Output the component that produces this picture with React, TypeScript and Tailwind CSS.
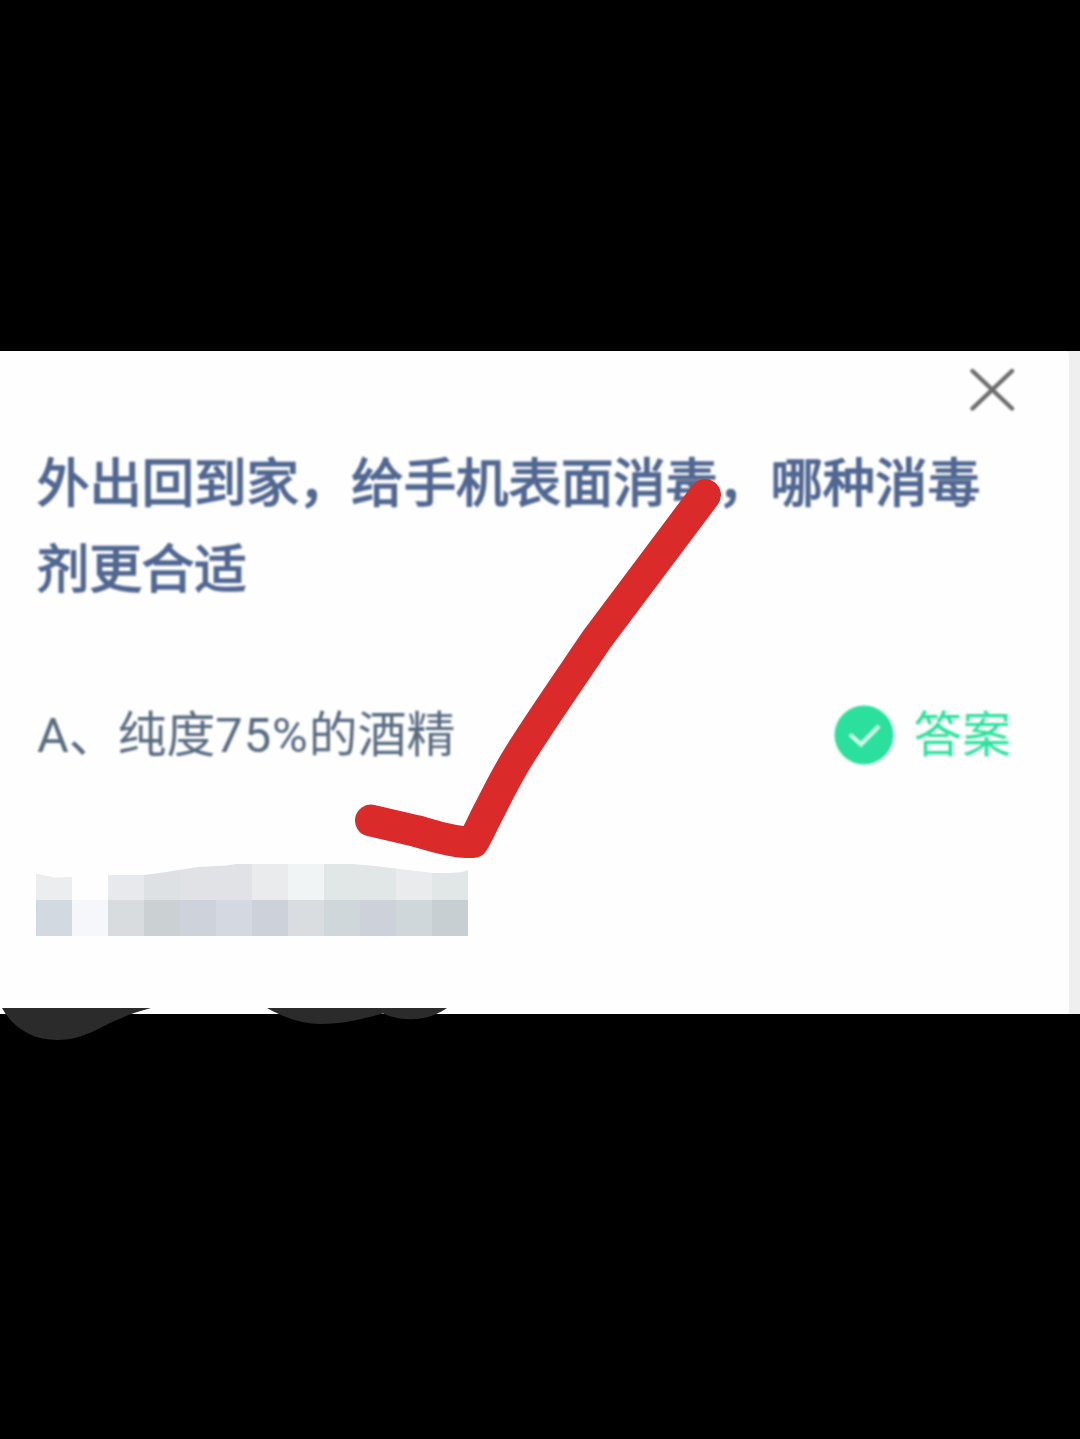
import React from "react";

const upperCells = [
  "bg-[#ebedee]", "bg-[#fefefe]", "bg-[#e7e9ec]", "bg-[#dde1e4]", "bg-[#e1e2e6]", "bg-[#e1e2e6]",
  "bg-[#e9ebed]", "bg-[#f1f4f5]", "bg-[#e1e7e7]", "bg-[#e1e7e7]", "bg-[#e9ebed]", "bg-[#e1e7e7]",
];

const lowerCells = [
  "bg-[#d2d9e0]", "bg-[#f6f7fa]", "bg-[#d9dcdf]", "bg-[#cbd0d3]", "bg-[#ced3db]", "bg-[#d3d8e1]",
  "bg-[#cdd2da]", "bg-[#d9dde0]", "bg-[#cfd7da]", "bg-[#cdd2da]", "bg-[#cfd7da]", "bg-[#c7cfd2]",
];

function CloseIcon() {
  return (
    <svg viewBox="0 0 48 44" className="h-[44px] w-[48px] blur-[0.9px]" fill="none" stroke="#6c6c6c" strokeWidth="4.4" strokeLinecap="round">
      <path d="M4.5 4 44 41.5M44 4 4.5 41.5" />
    </svg>
  );
}

function AnswerBadge() {
  return (
    <div className="flex items-center text-[#2de19e]">
      <svg viewBox="0 0 60 60" className="size-[60px] blur-[0.8px]">
        <circle cx="30" cy="30" r="29.5" fill="#2be09d" />
        <path d="M16 29.5 27 39.5 45 21" fill="none" stroke="#d8fff0" strokeWidth="4" />
      </svg>
      <span className="ml-[19px] pt-[2px] blur-[0.9px]">答案</span>
    </div>
  );
}

// Hidden second option, pixelated with an uneven upper edge.
function Mosaic() {
  return (
    <div className="mt-[99px] ml-[36px] grid h-[72px] w-[432px] grid-cols-12 grid-rows-2 [clip-path:polygon(0_10px,10px_11.5px,18px_13.5px,36px_13px,72px_11px,108px_11px,124px_9px,162px_3px,190px_1.5px,200px_0,316px_0,340px_2px,380px_7px,398px_9px,414px_9px,426px_8px,432px_6px,432px_72px,0_72px)]">
      {[...upperCells, ...lowerCells].map((color, i) => (
        <div key={i} className={color} />
      ))}
    </div>
  );
}

function RedTick() {
  return (
    <svg viewBox="340 470 400 400" className="pointer-events-none absolute top-[119px] left-[340px] size-[400px]" fill="none">
      <path
        d="M371 820.5 L416 831 C434 836 452 842 466 842 L473 842 C478 834 484 820 490 809 C499 791 506 777 517 759 C535 729 570 679 597 639 L705 495"
        stroke="#db2a2a"
        strokeWidth="32"
        strokeLinecap="round"
        strokeLinejoin="round"
      />
    </svg>
  );
}

function BrushMarks() {
  return (
    <svg viewBox="0 1008 460 34" className="absolute top-[657px] left-0 h-[34px] w-[460px]" fill="#2b2b2b">
      <path d="M2 1008C13 1028 33 1040 57 1040C72 1040 84 1036 96 1030C116 1020 131 1013 151 1008Z" />
      <path d="M267 1008C285 1018 303 1024 321 1024C343 1024 363 1019 383 1013.5C403 1022 427 1022 447 1008Z" />
    </svg>
  );
}

export default function App() {
  return (
    <div className="min-h-[1439px] w-[1080px] bg-black pt-[351px] font-[Roboto,'Noto_Sans_CJK_SC',sans-serif]">
      <main className="relative flex h-[663px] bg-[#efefef]">
        <section className="h-full w-[1069px] rounded-tr-[4px] bg-[#fefefe]">
          <div className="flex justify-end pt-[16px] pr-[53px]">
            <CloseIcon />
          </div>
          <h1 className="mt-[30px] ml-[37px] w-[960px] text-[52.4px] leading-[86px] font-normal text-[#506791] blur-[0.9px] [-webkit-text-stroke:1.6px_#506791]">
            外出回到家，给手机表面消毒，哪种消毒
            <br />
            剂更合适
          </h1>
          <div className="mt-[92px] flex h-[60px] items-center justify-between pr-[58px] pl-[37px] text-[48.8px] leading-[60px] text-[#586b80]">
            <span className="pt-[2px] blur-[0.9px]">
              A、纯度<span className="tracking-[1px]">75%</span>的酒精
            </span>
            <AnswerBadge />
          </div>
          <Mosaic />
        </section>
        <RedTick />
        <BrushMarks />
      </main>
    </div>
  );
}
